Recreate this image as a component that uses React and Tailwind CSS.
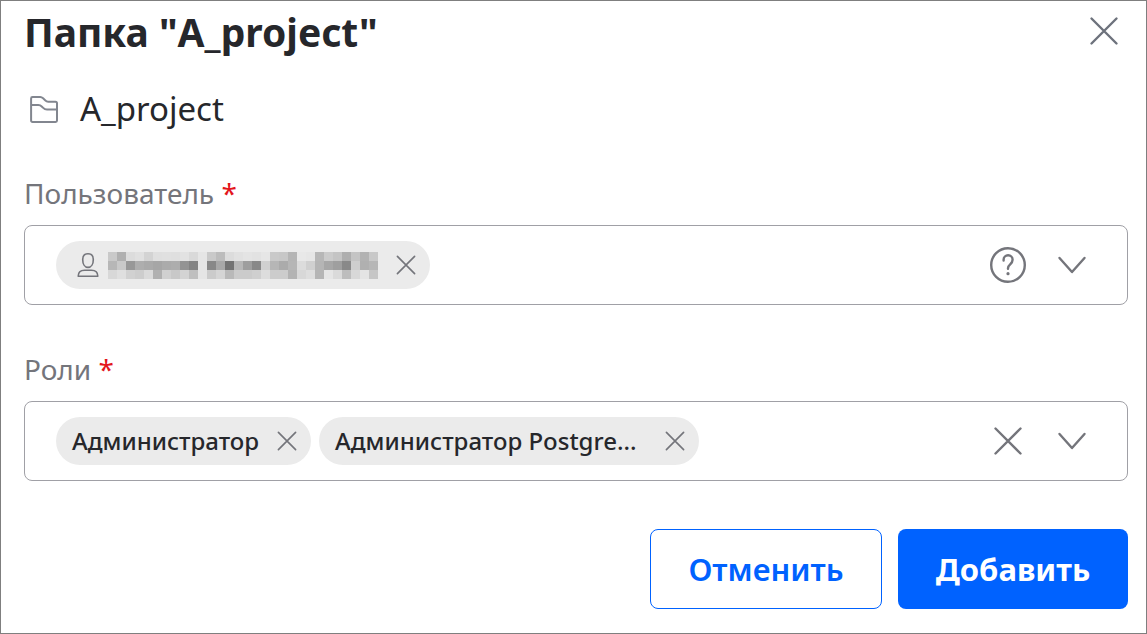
const nameRows = [
  "c9 b0 dc e0 d3 df e0 df e2 d9 e5 c9 bc dc e1 e4 e2 e6 c9 c7 b5 e8 e6 b7 cb c4 ae c4 b2 c8",
  "b7 c9 98 ae aa a6 ab ad 93 83 e5 88 a8 73 b7 9e 88 d0 b6 ab b6 dc d0 b5 a7 9f 89 ce b0 b6",
  "d8 df d1 cd da b0 d0 c8 d3 bf e5 cb d5 b9 cb cb cf dd cc cc b3 d8 de b5 e5 da bd d8 e4 c6",
];

const HiddenName = () => (
  <svg width="270" height="27" shapeRendering="crispEdges" aria-hidden="true">
    {nameRows.map((row, y) =>
      row
        .split(" ")
        .map((tone, x) => (
          <rect
            key={`${x}-${y}`}
            x={x * 9}
            y={y * 9}
            width="9"
            height="9"
            fill={`#${tone}${tone}${tone}`}
          />
        ))
    )}
  </svg>
);

const CrossIcon = ({ className }) => (
  <svg
    className={className}
    viewBox="0 0 32 32"
    fill="none"
    stroke="currentColor"
    strokeWidth="2.4"
    strokeLinecap="round"
  >
    <path d="M3.5 3.5l25 25M28.5 3.5l-25 25" />
  </svg>
);

const ChevronIcon = () => (
  <svg
    className="size-8"
    viewBox="0 0 32 32"
    fill="none"
    stroke="currentColor"
    strokeWidth="2.4"
    strokeLinecap="round"
    strokeLinejoin="round"
  >
    <path d="M3.5 9L16 23L28.5 9" />
  </svg>
);

const HelpIcon = () => (
  <svg
    className="size-10"
    viewBox="0 0 40 40"
    fill="none"
    stroke="currentColor"
    strokeWidth="2.4"
    strokeLinecap="round"
  >
    <circle cx="20" cy="20" r="16.8" />
    <path d="M15.6 15.6v-.8a4.5 4.5 0 0 1 9 0c0 4.600-4.600 4.400-4.600 8.400v.6" />
    <circle cx="20" cy="28.7" r="1.6" fill="currentColor" stroke="none" />
  </svg>
);

const FolderIcon = () => (
  <svg
    className="size-8"
    viewBox="0 0 32 32"
    fill="none"
    stroke="currentColor"
    strokeWidth="2"
    strokeLinejoin="round"
  >
    <path d="M4.500 4h7.800c1.200 0 1.900.5 2.800 1.300l2 1.900c.9.9 1.800 1.500 3.100 1.500h7.300c.9 0 1.500.6 1.500 1.500v17.300c0 .8-.6 1.400-1.400 1.400H4.500c-.8 0-1.400-.6-1.400-1.400V5.400C3.100 4.600 3.700 4 4.500 4z" />
    <path d="M3.100 12h7.200c1.600 0 2.600.6 3.700 1.700l.9.9c1.200 1.200 2.400 1.900 4.100 1.900h10" />
  </svg>
);

const UserIcon = () => (
  <svg
    className="size-6"
    viewBox="0 0 24 24"
    fill="none"
    stroke="currentColor"
    strokeWidth="1.6"
    strokeLinejoin="round"
  >
    <path d="M12 .8c3.500 0 5.300 2.300 5.300 5.600 0 4.500-2 8-5.300 8s-5.300-3.500-5.300-8C6.700 3.100 8.500.8 12 .8z" />
    <path d="M2.200 23.200c0-4.200 2.600-6 6.300-6h7c3.700 0 6.300 1.800 6.300 6z" />
  </svg>
);

const Chip = ({ label, children }) => (
  <div className="flex h-12 shrink-0 items-center gap-4 rounded-full bg-[#ebebeb] pl-4 pr-3 text-2xl font-medium text-[#26272b]">
    {children}
    <button
      type="button"
      aria-label={label}
      className="flex size-6 items-center justify-center text-[#74757b]"
    >
      <CrossIcon className="size-[22px]" />
    </button>
  </div>
);

const Field = ({ id, title, chips, action }) => (
  <div className="flex flex-col gap-3">
    <label htmlFor={id} className="text-[28px] leading-10 text-[#74757b]">
      {title} <span className="text-[#e3151b]">*</span>
    </label>
    <div className="flex h-20 items-center rounded-lg border border-[#a0a0a6] pl-[31px] pr-[39px] text-[#74757b]">
      <div className="flex shrink-0 gap-2">{chips}</div>
      <input
        id={id}
        type="text"
        className="h-12 min-w-0 flex-1 bg-transparent text-2xl outline-none"
      />
      <div className="flex items-center">
        {action}
        <button type="button" aria-label="Открыть список" className="ml-8">
          <ChevronIcon />
        </button>
      </div>
    </div>
  </div>
);

const App = () => {
  return (
    <div className="min-h-screen border border-[#7f7f7f] bg-white pl-[23px] pr-[18px] pt-1.5 font-['Noto_Sans','Open_Sans',sans-serif] text-[#26272b]">
      <header className="flex items-start justify-between">
        <h1 className="text-[39px] font-bold leading-[50px]">
          Папка "A_project"
        </h1>
        <button
          type="button"
          aria-label="Закрыть"
          className="mr-2 mt-2 text-[#6d727c]"
        >
          <CrossIcon className="size-8" />
        </button>
      </header>

      <div className="mt-8 flex items-center gap-5 pl-1">
        <span className="text-[#82868f]">
          <FolderIcon />
        </span>
        <span className="text-[33px] leading-10">A_project</span>
      </div>

      <form className="mt-11 flex flex-col">
        <Field
          id="user"
          title="Пользователь"
          chips={
            <Chip label="Удалить пользователя">
              <div className="flex items-center gap-2 pl-1 text-[#74757b]">
                <UserIcon />
                <HiddenName />
              </div>
            </Chip>
          }
          action={
            <button type="button" aria-label="Справка" className="-mx-1">
              <HelpIcon />
            </button>
          }
        />
        <div className="mt-11">
          <Field
            id="roles"
            title="Роли"
            chips={
              <>
                <Chip label="Удалить роль Администратор">
                  <span>Администратор</span>
                </Chip>
                <Chip label="Удалить роль Администратор Postgre">
                  <span className="w-[312px]">Администратор Postgre...</span>
                </Chip>
              </>
            }
            action={
              <button type="button" aria-label="Очистить">
                <CrossIcon className="size-8" />
              </button>
            }
          />
        </div>

        <div className="mt-12 flex justify-end gap-4 text-[31px] leading-10">
          <button
            type="button"
            className="h-20 w-[232px] rounded-lg border border-[#0062ff] font-semibold text-[#0062ff]"
          >
            Отменить
          </button>
          <button
            type="submit"
            className="h-20 w-[230px] rounded-lg bg-[#0062ff] font-bold text-white"
          >
            Добавить
          </button>
        </div>
      </form>
    </div>
  );
};

export default App;
